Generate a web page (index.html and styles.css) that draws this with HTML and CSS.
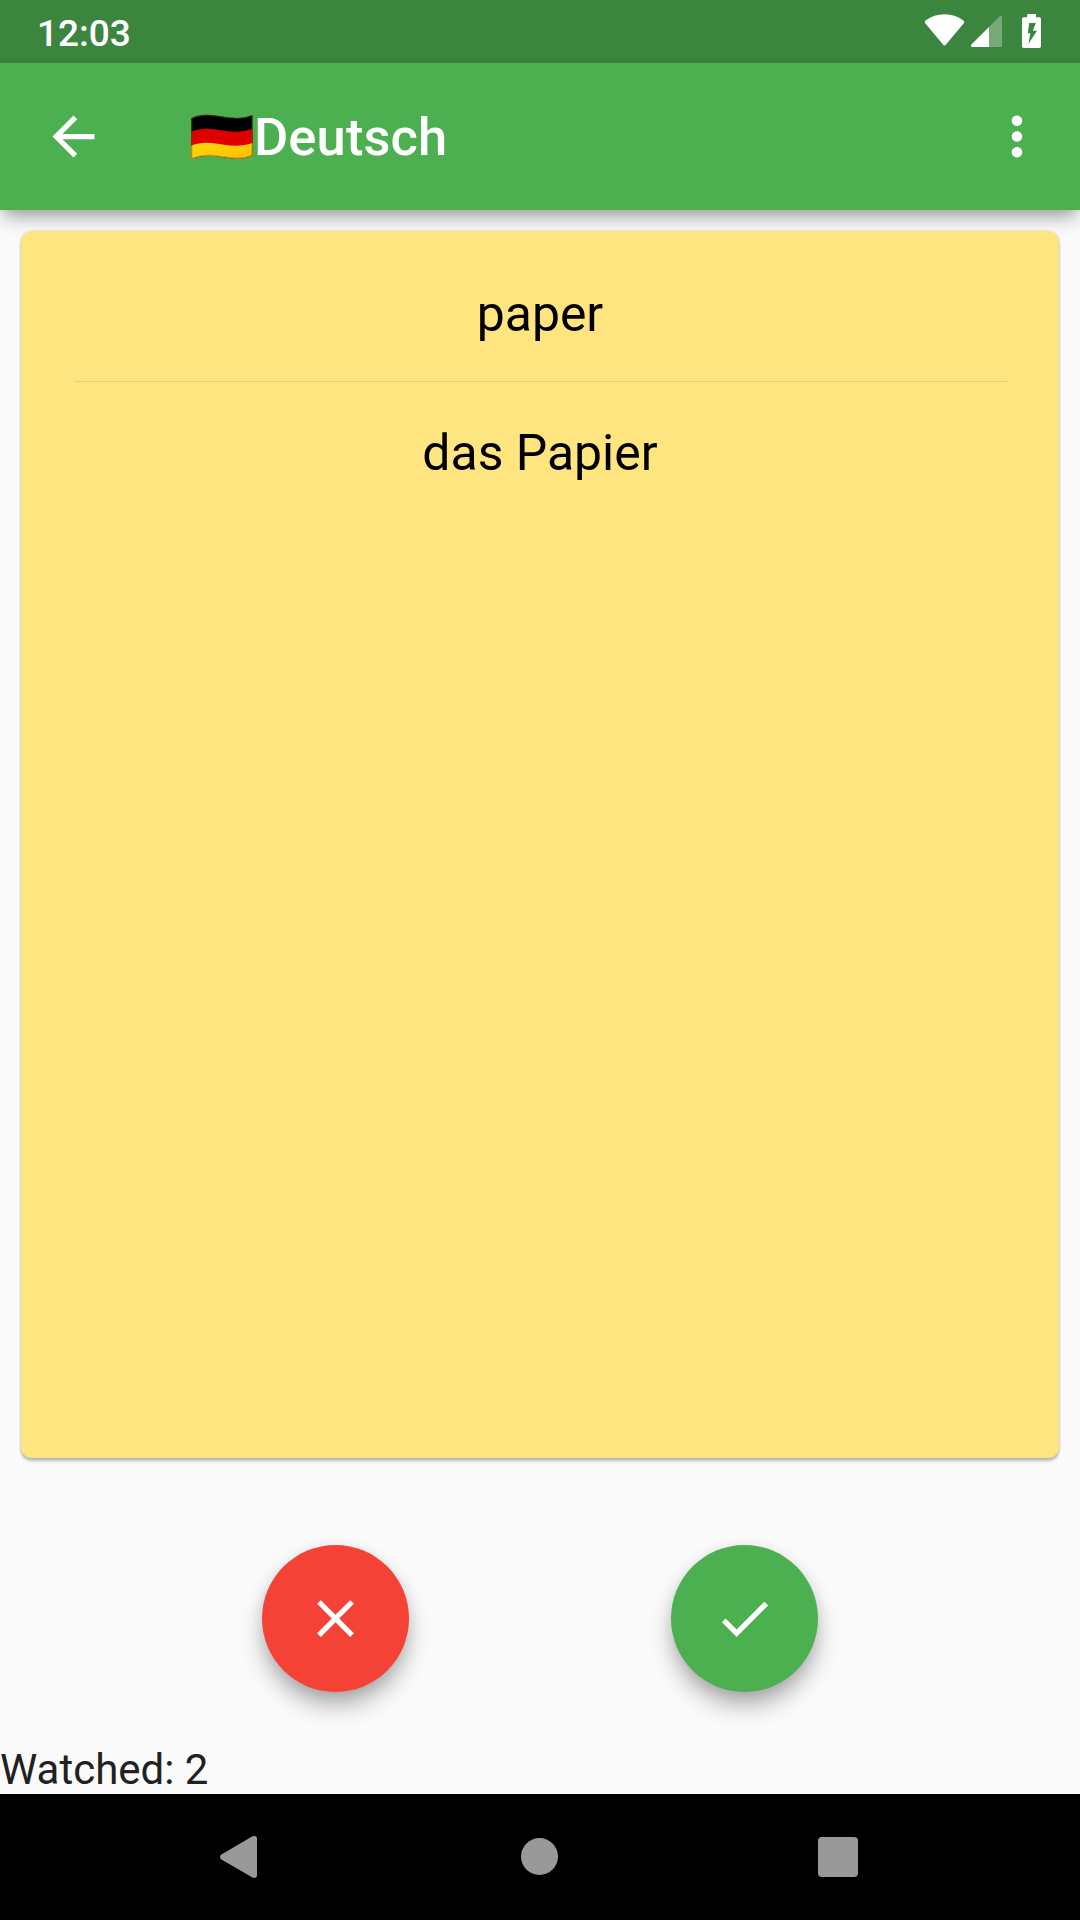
FILE: index.html
```html
<!DOCTYPE html>
<html lang="de">
<head>
<meta charset="utf-8">
<title>Deutsch</title>
<link rel="stylesheet" href="styles.css">
</head>
<body>
<div class="screen">
  <div class="status-bar">
    <span class="clock">12:03</span>
    <svg class="status-icons" width="120" height="36" viewBox="922 13 120 36">
      <path fill="#fff" d="M925.2 23.3Q924 21.600 925.600 20.500Q934 14.200 944.500 14.200T963.400 20.500Q965 21.600 963.800 23.300L946 44.600Q944.500 46.300 943 44.600Z"/>
      <path fill="#76a978" d="M989 27L999.500 16.500Q1002 14.800 1002 17.500V45.500Q1002 47 1000.500 47H989Z"/>
      <path fill="#fff" d="M989 27V47H972Q970.200 46.600 971.200 44.800Z"/>
      <path fill="#fff" fill-rule="evenodd" d="M1027.200 14H1036V17.300H1039.300Q1041 17.300 1041 19V46.200Q1041 48 1039.300 48H1023.700Q1022 48 1022 46.200V19Q1022 17.300 1023.700 17.300H1027.200ZM1029.200 23L1027.800 33.200H1030.400L1028.400 44L1037 30.800H1032.800L1035.800 23Z"/>
    </svg>
  </div>
  <header class="app-bar">
    <svg class="icon" viewBox="0 0 24 24"><path d="M20 11H7.830l5.590-5.590L12 4l-8 8 8 8 1.410-1.410L7.830 13H20v-2z"/></svg>
    <h1 class="title">
      <svg class="flag" viewBox="189 112 65 52" role="img" aria-label="Germany">
        <defs>
          <linearGradient id="gold" x1="0" y1="0" x2="1" y2="1"><stop offset="0" stop-color="#ffd90a"/><stop offset="1" stop-color="#ffb900"/></linearGradient>
          <clipPath id="cloth"><path d="M191.300 118.300C202 112.500 214 115.300 224 116.700S243 119 252.500 115V155.600C242 160.500 232 158.500 222 157S202 154.500 191.300 159.300Z"/></clipPath>
        </defs>
        <g clip-path="url(#cloth)">
          <path d="M190 112H254V164H190Z"/>
          <path fill="#df0000" d="M190 132.300C202 126.700 214 129.300 224 130.800S243 132.500 254 128.500V164H190Z"/>
          <path fill="url(#gold)" d="M190 146.300C202 140.700 214 143.300 224 144.700S243 146.500 254 142.300V164H190Z"/>
          <path fill="none" stroke="#755b1b" stroke-opacity=".4" stroke-width="2.200" d="M191.300 118.300C202 112.500 214 115.300 224 116.700S243 119 252.500 115V155.600C242 160.500 232 158.500 222 157S202 154.500 191.300 159.300Z"/>
        </g>
      </svg><span>Deutsch</span>
    </h1>
    <svg class="icon" viewBox="-.19 0 24 24"><path d="M12 8c1.100 0 2-.9 2-2s-.9-2-2-2-2 .9-2 2 .9 2 2 2zm0 2c-1.100 0-2 .9-2 2s.9 2 2 2 2-.9 2-2-.9-2-2-2zm0 6c-1.100 0-2 .9-2 2s.9 2 2 2 2-.9 2-2-.9-2-2-2z"/></svg>
  </header>
  <main class="content">
    <section class="card">
      <p class="word">paper</p>
      <hr class="divider">
      <p class="word">das Papier</p>
    </section>
    <div class="actions">
      <button class="fab fab-wrong" aria-label="Wrong"><svg class="icon" viewBox="0 0 24 24"><path d="M19 6.410L17.590 5 12 10.590 6.410 5 5 6.410 10.590 12 5 17.590 6.410 19 12 13.410 17.590 19 19 17.590 13.410 12z"/></svg></button>
      <button class="fab fab-right" aria-label="Right"><svg class="icon" viewBox="0 0 24 24"><path d="M9 16.170L4.830 12l-1.420 1.410L9 19 21 7l-1.410-1.410z"/></svg></button>
    </div>
    <p class="watched">Watched: 2</p>
  </main>
  <nav class="nav-bar">
    <svg width="40" height="44" viewBox="218 1835 40 44"><path fill="#999" d="M221 1854.800L252.500 1836.300Q257 1835 257 1838.500V1875.500Q257 1879 252.500 1877.500L221 1859.200Q219 1857 221 1854.800Z"/></svg>
    <span class="nav-home"></span>
    <span class="nav-recent"></span>
  </nav>
</div>
</body>
</html>
```
FILE: styles.css
```css
* { box-sizing: border-box; margin: 0; }
body { font-family: Roboto, "Noto Sans", sans-serif; }
.screen {
  width: 1080px;
  height: 1920px;
  display: flex;
  flex-direction: column;
  background: #fafafa;
  overflow: hidden;
}
.status-bar {
  height: 63px;
  flex: none;
  background: #3c853f;
  display: flex;
  justify-content: space-between;
  padding: 0 38px 0 37px;
  color: #fff;
}
.clock { font-size: 37px; font-weight: 500; line-height: 68px; }
.status-icons { margin-top: 13px; }
.app-bar {
  height: 147px;
  flex: none;
  display: flex;
  align-items: center;
  padding: 0 32px 0 42px;
  background: #4caf50;
  color: #fff;
  box-shadow: 0 11px 17px -4px rgba(0,0,0,.34), 0 2px 8px rgba(0,0,0,.06);
}
.icon { width: 63px; height: 63px; fill: #fff; flex: none; display: block; }
.title {
  flex: 1;
  display: flex;
  align-items: center;
  padding-left: 84px;
  font-size: 52.5px;
  font-weight: 500;
  line-height: 62px;
  letter-spacing: .1px;
}
.flag { width: 65px; height: 52px; margin-top: 3px; }
.content { flex: 1; display: flex; flex-direction: column; }
.card {
  height: 1227px;
  flex: none;
  margin: 21px 21px 0;
  padding: 53.5px 52.5px;
  background: #ffe57f;
  border-radius: 10.5px;
  box-shadow: 0 3px 3px rgba(0,0,0,.25), 0 0 3px rgba(0,0,0,.12);
}
.word { font-size: 49.9px; line-height: 59px; text-align: center; color: #000; }
.divider { height: 1px; border: 0; margin: 37px 0 42px; background: #e5ce72; }
.actions { display: flex; justify-content: space-evenly; margin-top: 86.6px; }
.fab {
  width: 147px;
  height: 147px;
  border: 0;
  padding: 0;
  border-radius: 50%;
  display: grid;
  place-items: center;
  box-shadow: 0 15px 25px -3px rgba(0,0,0,.33), 0 2px 14px rgba(0,0,0,.08);
}
.fab-wrong { background: #f44336; }
.fab-right { background: #4caf50; }
.watched { margin-top: auto; font-size: 42px; line-height: 49px; color: #212121; }
.nav-bar {
  height: 126px;
  flex: none;
  display: flex;
  align-items: center;
  justify-content: space-between;
  padding: 0 222px 0 218px;
  background: #000;
}
.nav-home { width: 37px; height: 37px; border-radius: 50%; background: #999; margin: 0 0 1px 3px; }
.nav-recent { width: 40px; height: 40px; border-radius: 4px; background: #999; }
```
